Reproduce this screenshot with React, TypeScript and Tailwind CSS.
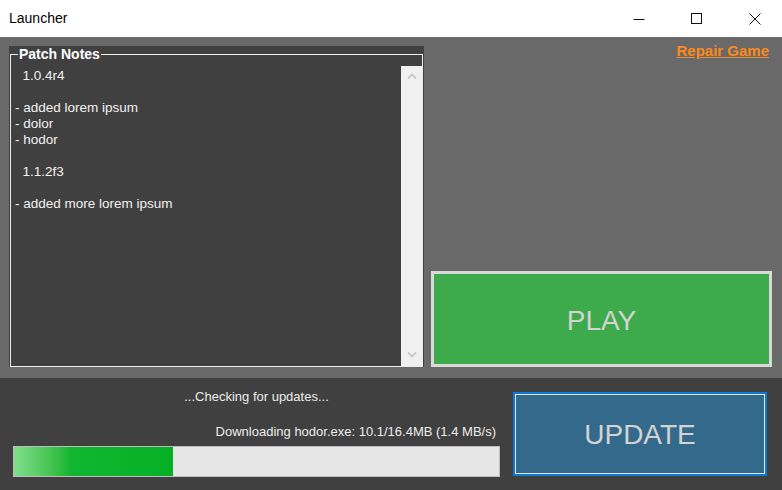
import { ReactNode } from 'react';

const FONT = "font-['Liberation_Sans',Arial,sans-serif]";

const NOTES = [
  '  1.0.4r4',
  '',
  '- added lorem ipsum',
  '- dolor',
  '- hodor',
  '',
  '  1.1.2f3',
  '',
  '- added more lorem ipsum',
];

function CaptionButton({ children }: { children: ReactNode }) {
  return (
    <div className="flex h-full w-[58px] items-center justify-center">
      <svg width="12" height="12" viewBox="0 0 12 12" fill="none" stroke="#111" strokeWidth="1">
        {children}
      </svg>
    </div>
  );
}

function TitleBar() {
  return (
    <div className="flex h-[37px] items-center bg-white">
      <span className="ml-[9px] text-[14px] text-black">Launcher</span>
      <div className="ml-auto mr-[-2px] flex h-full">
        <CaptionButton>
          <path d="M0.5 6.5H11.5" />
        </CaptionButton>
        <CaptionButton>
          <rect x="0.5" y="0.5" width="10" height="10" />
        </CaptionButton>
        <CaptionButton>
          <path d="M0.5 0.5L11.5 11.5M11.5 0.5L0.5 11.5" />
        </CaptionButton>
      </div>
    </div>
  );
}

function Chevron({ up }: { up?: boolean }) {
  return (
    <svg width="10" height="6" viewBox="0 0 10 6" fill="none" stroke="#c2c2c2" strokeWidth="1.6">
      <path d={up ? 'M1 5.5L5 1.5L9 5.5' : 'M1 0.5L5 4.5L9 0.5'} />
    </svg>
  );
}

function PatchNotes() {
  return (
    <div className="mt-[9px] h-[321px] w-[415px] bg-[#404040] pt-[1px]">
      <fieldset className="ml-px mr-px h-[320px] border border-[#eeeeee]">
        <legend className="ml-[7px] px-px text-[14px] font-bold leading-[14px] text-white">
          Patch Notes
        </legend>
        <div className="mt-[5px] flex h-[300px]">
          <div className="flex-1 whitespace-pre pl-[4px] pt-[2px] text-[13.5px] leading-[16px] text-[#f2f2f2]">
            {NOTES.map((line, i) => (
              <div key={i} className="h-[16px]">
                {line}
              </div>
            ))}
          </div>
          <div className="flex w-[21px] flex-col items-center justify-between bg-[#f0f0f0] pb-[8px] pt-[7px]">
            <Chevron up />
            <Chevron />
          </div>
        </div>
      </fieldset>
    </div>
  );
}

export default function App() {
  return (
    <div className={`flex h-[490px] w-[782px] flex-col overflow-hidden ${FONT}`}>
      <TitleBar />

      {/* main area */}
      <div className="flex h-[341px] items-start bg-[#696969] px-[9px]">
        <PatchNotes />
        <div className="ml-[7px] flex h-full w-[341px] flex-col pb-[11px] pt-[5px]">
          <a className="mr-[3px] self-end text-[15px] font-bold leading-[17px] text-[#fb8a1e] underline">
            Repair Game
          </a>
          <div className="flex-1" />
          <button className="flex h-[96px] items-center justify-center border-[3px] border-[#d9d9d9] bg-[#3dab4b] pt-[4px] text-[28px] text-[#d3d3d3]">
            PLAY
          </button>
        </div>
      </div>

      {/* bottom area */}
      <div className="flex flex-1 bg-[#404040]">
        <div className="ml-[13px] flex w-[487px] flex-col pt-[11px]">
          <div className="text-center text-[13px] leading-[16px] text-[#ececec]">
            ...Checking for updates...
          </div>
          <div className="mt-[19px] pr-[4px] text-right text-[13px] leading-[16px] text-[#ececec]">
            Downloading hodor.exe: 10.1/16.4MB (1.4 MB/s)
          </div>
          <div className="mt-[6px] h-[31px] border border-[#bcbcbc] bg-[#e6e6e6]">
            <div className="h-full w-[159px] bg-linear-to-r from-[#7fdf8b] from-0% via-[#10b630] via-35% to-[#06b025]" />
          </div>
        </div>
        <div className="ml-[13px] mt-[14px] h-[84px] w-[254px] border-2 border-[#0a7ad8]">
          <button className="flex h-full w-full items-center justify-center border border-[#e4e4e4] bg-[#336a8c] pt-[2px] text-[28px] text-[#d3d3d3]">
            UPDATE
          </button>
        </div>
      </div>
    </div>
  );
}
